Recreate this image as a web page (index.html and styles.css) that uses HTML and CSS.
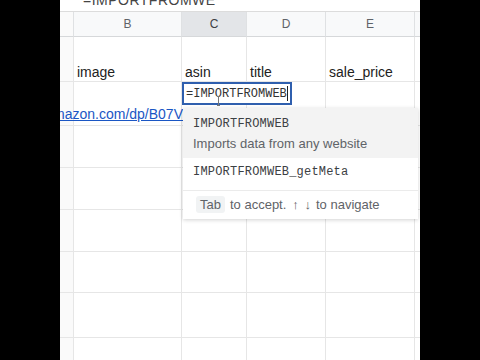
FILE: index.html
```html
<!DOCTYPE html>
<html lang="en">
<head>
    <meta charset="UTF-8">
    <title>Sheet - IMPORTFROMWEB</title>
    <link rel="stylesheet" href="styles.css">
</head>
<body>
    <div class="sheet">
        <div class="formula-bar"><span class="formula-text">=IMPORTFROMWE</span></div>
        <div class="grid">
            <div class="hd rn"></div>
            <div class="hd">B</div>
            <div class="hd active">C</div>
            <div class="hd">D</div>
            <div class="hd">E</div>
            <div class="hd end"></div>

            <div class="cell rn tall"></div>
            <div class="cell tall">image</div>
            <div class="cell tall">asin</div>
            <div class="cell tall">title</div>
            <div class="cell tall">sale_price</div>
            <div class="cell end tall"></div>

            <div class="cell rn"></div>
            <div class="cell link-cell"><a class="link" href="#">https://www.amazon.com/dp/B07V</a></div>
            <div class="cell"></div>
            <div class="cell"></div>
            <div class="cell"></div>
            <div class="cell end"></div>

            <div class="cell rn"></div><div class="cell"></div><div class="cell"></div><div class="cell"></div><div class="cell"></div><div class="cell end"></div>
            <div class="cell rn"></div><div class="cell"></div><div class="cell"></div><div class="cell"></div><div class="cell"></div><div class="cell end"></div>
            <div class="cell rn"></div><div class="cell"></div><div class="cell"></div><div class="cell"></div><div class="cell"></div><div class="cell end"></div>
            <div class="cell rn"></div><div class="cell"></div><div class="cell"></div><div class="cell"></div><div class="cell"></div><div class="cell end"></div>
            <div class="cell rn"></div><div class="cell"></div><div class="cell"></div><div class="cell"></div><div class="cell"></div><div class="cell end"></div>
            <div class="cell rn"></div><div class="cell"></div><div class="cell"></div><div class="cell"></div><div class="cell"></div><div class="cell end"></div>
        </div>

        <div class="editor">=IMPORTFROMWEB<span class="caret"></span></div>
        <span class="ibeam"></span>

        <div class="suggest">
            <div class="item selected">
                <div class="fn">IMPORTFROMWEB</div>
                <div class="desc">Imports data from any website</div>
            </div>
            <div class="item">
                <div class="fn">IMPORTFROMWEB_getMeta</div>
            </div>
            <div class="hint">
                <span class="key">Tab</span>
                <span>to accept.</span>
                <span class="arrows">↑ ↓</span>
                <span>to navigate</span>
            </div>
        </div>
    </div>
</body>
</html>
```

FILE: styles.css
```css
body{
  margin: 0;
  background: #000;
  font-family: 'Liberation Sans', Arial, sans-serif;
}
.sheet{
  position: relative;
  width: 360px;
  height: 360px;
  margin: 0 auto;
  background: #fff;
  overflow: hidden;
}
.formula-bar{
  height: 11px;
  border-bottom: 1px solid #dcdcdc;
  padding-left: 23px;
  overflow: hidden;
}
.formula-text{
  display: block;
  margin-top: -8px;
  font-size: 14px;
  color: #444;
  letter-spacing: 0.5px;
}
.grid{
  display: grid;
  grid-template-columns: 14px 108px 65px 79px 89px 5px;
  grid-template-rows: 25px 45px 44px 42px 42px 42px 41px 45px 42px;
}
.hd{
  background: #f8f9fa;
  border-right: 1px solid #dfe1e3;
  border-bottom: 1px solid #d6d8da;
  color: #5f6368;
  font-size: 12px;
  display: flex;
  align-items: center;
  justify-content: center;
}
.hd.active{
  background: #e3e5e8;
  color: #3c4043;
}
.cell{
  border-right: 1px solid #e6e6e6;
  border-bottom: 1px solid #e6e6e6;
  font-size: 14px;
  color: #222;
  display: flex;
  align-items: flex-end;
  padding: 0 3px 1px;
  white-space: nowrap;
}
.rn{
  background: #fafafa;
  padding: 0;
}
.end{
  border-right: none;
  padding: 0;
}
.link-cell{
  justify-content: flex-end;
  padding-bottom: 3px;
  padding-right: 0;
}
.link{
  color: #1a56c4;
  text-decoration: underline;
  margin-right: -2px;
}
.editor{
  position: absolute;
  left: 122px;
  top: 82px;
  width: 104px;
  height: 19px;
  border: 2px solid #2f5fae;
  background: #fff;
  font-family: 'Liberation Mono', monospace;
  font-size: 12px;
  line-height: 21px;
  color: #333;
  padding-left: 2px;
}
.caret{
  display: inline-block;
  width: 1px;
  height: 15px;
  background: #222;
  vertical-align: middle;
}
.ibeam{
  position: absolute;
  left: 157px;
  top: 96px;
  width: 3px;
  height: 8px;
  border-top: 1px solid #777;
  border-bottom: 1px solid #777;
  background: linear-gradient(#777, #777) center / 1px 100% no-repeat;
}
.suggest{
  position: absolute;
  left: 123px;
  top: 108px;
  width: 235px;
  background: #fff;
  box-shadow: 0 1px 4px rgba(0,0,0,0.18);
  color: #3c4043;
}
.item{
  padding: 7px 10px 6px;
}
.item.selected{
  background: #f3f3f3;
  padding-top: 9px;
  padding-bottom: 7px;
}
.fn{
  font-family: 'Liberation Mono', monospace;
  font-size: 12px;
  line-height: 15px;
  letter-spacing: 0.2px;
}
.desc{
  margin-top: 4px;
  font-size: 13px;
  color: #5f6368;
}
.hint{
  display: flex;
  align-items: center;
  gap: 4px;
  border-top: 1px solid #ebebeb;
  margin-top: 4px;
  padding: 5px 8px 6px 13px;
  font-size: 13px;
  color: #5f6368;
}
.key{
  background: #f1f3f4;
  border-radius: 3px;
  padding: 1px 4px;
  margin-right: 1px;
}
.arrows{
  margin-left: 2px;
  letter-spacing: 1px;
}
```
